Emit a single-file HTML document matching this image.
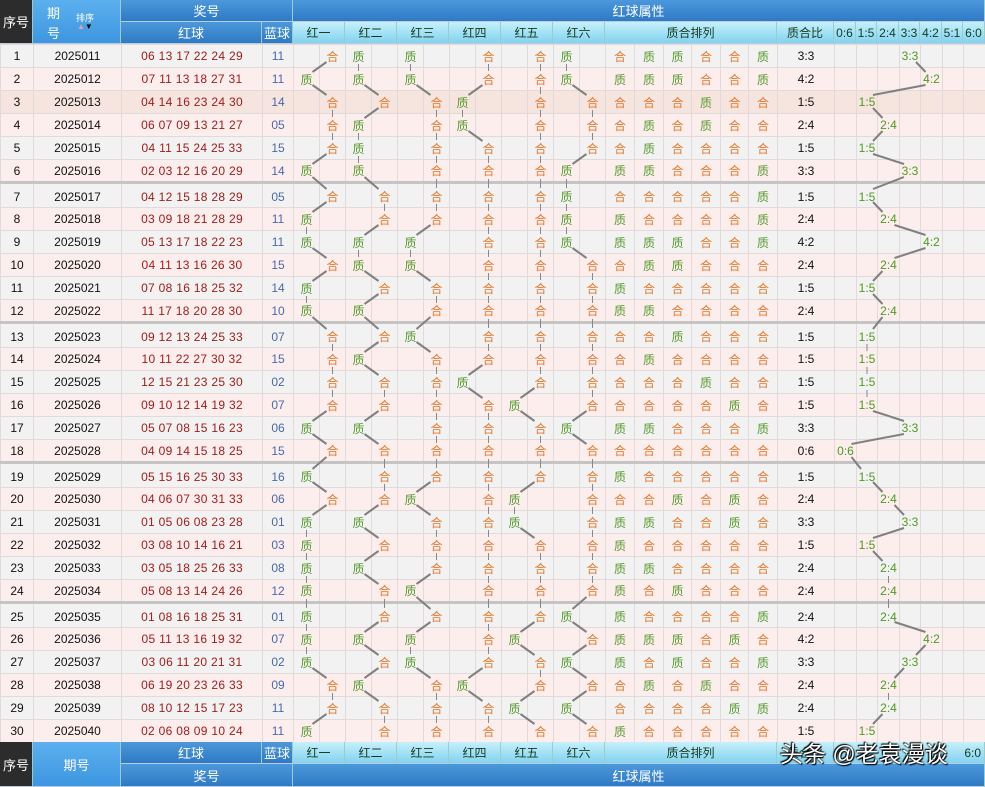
<!DOCTYPE html>
<html><head><meta charset="utf-8">
<style>
*{margin:0;padding:0;box-sizing:border-box}
body{width:985px;height:787px;overflow:hidden;background:#fff;position:relative;font-family:"Liberation Sans","Noto Sans CJK SC",sans-serif}
.hd{position:absolute;display:flex;align-items:center;justify-content:center;color:#fff;font-size:13px;border-right:1px solid #9cc;border-bottom:1px solid #bcd;font-family:"Liberation Sans","Noto Sans CJK SC",sans-serif}
.dk{background:#2c2c2c}
.bl{background:linear-gradient(#4c98dc,#2f7ac4)}
.lb{background:linear-gradient(#5cb0ee,#3d96e0)}
.cy{background:linear-gradient(#c6f0fb,#82d3ef);color:#163a20;font-size:12px}
table{position:absolute;left:0;top:44px;border-collapse:collapse;table-layout:fixed;width:985px}
td{height:23px;border:1px solid #e2dada;padding:0;text-align:center;font-size:12px;color:#111;white-space:nowrap;overflow:hidden;font-family:"Liberation Sans","Noto Sans CJK SC",sans-serif}
tr.a td{background:#f2f2f2}
tr.p td{background:#fdeeee}
tr.q td{background:#f6e5df}
tr.s td{border-top:3px solid #c4c4c4;height:25px;padding-top:2px}
td.r{color:#a01c1c;font-size:12px;letter-spacing:0.3px}
td.b{color:#4a68a8;font-size:12px}
td.z{color:#5a9a30}
td.h{color:#e8782c}
td.g{color:#4f9a1e;overflow:visible}
svg{position:absolute;left:0;top:0;pointer-events:none}
.wm{position:absolute;left:780px;top:735px;font-size:23px;color:#fff;font-family:"Liberation Sans","Noto Sans CJK SC",sans-serif;text-shadow:0 0 2px #000,1px 1px 1px #000,-1px -1px 1px #000;white-space:nowrap}
</style></head><body>
<div class="hd dk" style="left:0;top:0;width:33px;height:44px">序号</div>
<div class="hd lb" style="left:33px;top:0;width:88px;height:44px"></div>
<div style="position:absolute;left:47px;top:4px;color:#fff;font-size:13px;line-height:20px;width:14px">期<br>号</div>
<div style="position:absolute;left:76px;top:11px;color:#fff;font-size:9px">排序</div>
<div style="position:absolute;left:77px;top:22px;font-size:8px;color:#e8a0a0">▲<span style="color:#111">▼</span></div>
<div class="hd bl" style="left:121px;top:0;width:172px;height:22px">奖号</div>
<div class="hd bl" style="left:121px;top:22px;width:141px;height:22px">红球</div>
<div class="hd bl" style="left:262px;top:22px;width:31px;height:22px">蓝球</div>
<div class="hd bl" style="left:293px;top:0;width:692px;height:22px">红球属性</div>
<div class="hd cy" style="left:293px;top:22px;width:52px;height:22px">红一</div>
<div class="hd cy" style="left:345px;top:22px;width:52px;height:22px">红二</div>
<div class="hd cy" style="left:397px;top:22px;width:52px;height:22px">红三</div>
<div class="hd cy" style="left:449px;top:22px;width:52px;height:22px">红四</div>
<div class="hd cy" style="left:501px;top:22px;width:52px;height:22px">红五</div>
<div class="hd cy" style="left:553px;top:22px;width:52px;height:22px">红六</div>
<div class="hd cy" style="left:605px;top:22px;width:172px;height:22px">质合排列</div>
<div class="hd cy" style="left:777px;top:22px;width:57px;height:22px">质合比</div>
<div class="hd cy" style="left:834px;top:22px;width:22px;height:22px">0:6</div>
<div class="hd cy" style="left:856px;top:22px;width:21px;height:22px">1:5</div>
<div class="hd cy" style="left:877px;top:22px;width:22px;height:22px">2:4</div>
<div class="hd cy" style="left:899px;top:22px;width:21px;height:22px">3:3</div>
<div class="hd cy" style="left:920px;top:22px;width:22px;height:22px">4:2</div>
<div class="hd cy" style="left:942px;top:22px;width:21px;height:22px">5:1</div>
<div class="hd cy" style="left:963px;top:22px;width:22px;height:22px">6:0</div>

<table id="t">
<colgroup><col style="width:33px"><col style="width:88px"><col style="width:141px"><col style="width:31px">
<col style="width:26px"><col style="width:26px"><col style="width:26px"><col style="width:26px"><col style="width:26px"><col style="width:26px"><col style="width:26px"><col style="width:26px"><col style="width:26px"><col style="width:26px"><col style="width:26px"><col style="width:26px">
<col style="width:29px"><col style="width:29px"><col style="width:28px"><col style="width:29px"><col style="width:28px"><col style="width:29px">
<col style="width:57px"><col style="width:22px"><col style="width:21px"><col style="width:22px"><col style="width:21px"><col style="width:22px"><col style="width:21px"><col style="width:22px"></colgroup>
<tr class=a><td>1<td>2025011<td class=r>06 13 17 22 24 29<td class=b>11<td><td class=h>合<td class=z>质<td><td class=z>质<td><td><td class=h>合<td><td class=h>合<td class=z>质<td><td class=h>合<td class=z>质<td class=z>质<td class=h>合<td class=h>合<td class=z>质<td>3:3<td><td><td><td class=g>3:3<td><td><td>
<tr class=p><td>2<td>2025012<td class=r>07 11 13 18 27 31<td class=b>11<td class=z>质<td><td class=z>质<td><td class=z>质<td><td><td class=h>合<td><td class=h>合<td class=z>质<td><td class=z>质<td class=z>质<td class=z>质<td class=h>合<td class=h>合<td class=z>质<td>4:2<td><td><td><td><td class=g>4:2<td><td>
<tr class=q><td>3<td>2025013<td class=r>04 14 16 23 24 30<td class=b>14<td><td class=h>合<td><td class=h>合<td><td class=h>合<td class=z>质<td><td><td class=h>合<td><td class=h>合<td class=h>合<td class=h>合<td class=h>合<td class=z>质<td class=h>合<td class=h>合<td>1:5<td><td class=g>1:5<td><td><td><td><td>
<tr class=p><td>4<td>2025014<td class=r>06 07 09 13 21 27<td class=b>05<td><td class=h>合<td class=z>质<td><td><td class=h>合<td class=z>质<td><td><td class=h>合<td><td class=h>合<td class=h>合<td class=z>质<td class=h>合<td class=z>质<td class=h>合<td class=h>合<td>2:4<td><td><td class=g>2:4<td><td><td><td>
<tr class=a><td>5<td>2025015<td class=r>04 11 15 24 25 33<td class=b>15<td><td class=h>合<td class=z>质<td><td><td class=h>合<td><td class=h>合<td><td class=h>合<td><td class=h>合<td class=h>合<td class=z>质<td class=h>合<td class=h>合<td class=h>合<td class=h>合<td>1:5<td><td class=g>1:5<td><td><td><td><td>
<tr class=p><td>6<td>2025016<td class=r>02 03 12 16 20 29<td class=b>14<td class=z>质<td><td class=z>质<td><td><td class=h>合<td><td class=h>合<td><td class=h>合<td class=z>质<td><td class=z>质<td class=z>质<td class=h>合<td class=h>合<td class=h>合<td class=z>质<td>3:3<td><td><td><td class=g>3:3<td><td><td>
<tr class="a s"><td>7<td>2025017<td class=r>04 12 15 18 28 29<td class=b>05<td><td class=h>合<td><td class=h>合<td><td class=h>合<td><td class=h>合<td><td class=h>合<td class=z>质<td><td class=h>合<td class=h>合<td class=h>合<td class=h>合<td class=h>合<td class=z>质<td>1:5<td><td class=g>1:5<td><td><td><td><td>
<tr class=p><td>8<td>2025018<td class=r>03 09 18 21 28 29<td class=b>11<td class=z>质<td><td><td class=h>合<td><td class=h>合<td><td class=h>合<td><td class=h>合<td class=z>质<td><td class=z>质<td class=h>合<td class=h>合<td class=h>合<td class=h>合<td class=z>质<td>2:4<td><td><td class=g>2:4<td><td><td><td>
<tr class=a><td>9<td>2025019<td class=r>05 13 17 18 22 23<td class=b>11<td class=z>质<td><td class=z>质<td><td class=z>质<td><td><td class=h>合<td><td class=h>合<td class=z>质<td><td class=z>质<td class=z>质<td class=z>质<td class=h>合<td class=h>合<td class=z>质<td>4:2<td><td><td><td><td class=g>4:2<td><td>
<tr class=p><td>10<td>2025020<td class=r>04 11 13 16 26 30<td class=b>15<td><td class=h>合<td class=z>质<td><td class=z>质<td><td><td class=h>合<td><td class=h>合<td><td class=h>合<td class=h>合<td class=z>质<td class=z>质<td class=h>合<td class=h>合<td class=h>合<td>2:4<td><td><td class=g>2:4<td><td><td><td>
<tr class=a><td>11<td>2025021<td class=r>07 08 16 18 25 32<td class=b>14<td class=z>质<td><td><td class=h>合<td><td class=h>合<td><td class=h>合<td><td class=h>合<td><td class=h>合<td class=z>质<td class=h>合<td class=h>合<td class=h>合<td class=h>合<td class=h>合<td>1:5<td><td class=g>1:5<td><td><td><td><td>
<tr class=p><td>12<td>2025022<td class=r>11 17 18 20 28 30<td class=b>10<td class=z>质<td><td class=z>质<td><td><td class=h>合<td><td class=h>合<td><td class=h>合<td><td class=h>合<td class=z>质<td class=z>质<td class=h>合<td class=h>合<td class=h>合<td class=h>合<td>2:4<td><td><td class=g>2:4<td><td><td><td>
<tr class="a s"><td>13<td>2025023<td class=r>09 12 13 24 25 33<td class=b>07<td><td class=h>合<td><td class=h>合<td class=z>质<td><td><td class=h>合<td><td class=h>合<td><td class=h>合<td class=h>合<td class=h>合<td class=z>质<td class=h>合<td class=h>合<td class=h>合<td>1:5<td><td class=g>1:5<td><td><td><td><td>
<tr class=p><td>14<td>2025024<td class=r>10 11 22 27 30 32<td class=b>15<td><td class=h>合<td class=z>质<td><td><td class=h>合<td><td class=h>合<td><td class=h>合<td><td class=h>合<td class=h>合<td class=z>质<td class=h>合<td class=h>合<td class=h>合<td class=h>合<td>1:5<td><td class=g>1:5<td><td><td><td><td>
<tr class=a><td>15<td>2025025<td class=r>12 15 21 23 25 30<td class=b>02<td><td class=h>合<td><td class=h>合<td><td class=h>合<td class=z>质<td><td><td class=h>合<td><td class=h>合<td class=h>合<td class=h>合<td class=h>合<td class=z>质<td class=h>合<td class=h>合<td>1:5<td><td class=g>1:5<td><td><td><td><td>
<tr class=p><td>16<td>2025026<td class=r>09 10 12 14 19 32<td class=b>07<td><td class=h>合<td><td class=h>合<td><td class=h>合<td><td class=h>合<td class=z>质<td><td><td class=h>合<td class=h>合<td class=h>合<td class=h>合<td class=h>合<td class=z>质<td class=h>合<td>1:5<td><td class=g>1:5<td><td><td><td><td>
<tr class=a><td>17<td>2025027<td class=r>05 07 08 15 16 23<td class=b>06<td class=z>质<td><td class=z>质<td><td><td class=h>合<td><td class=h>合<td><td class=h>合<td class=z>质<td><td class=z>质<td class=z>质<td class=h>合<td class=h>合<td class=h>合<td class=z>质<td>3:3<td><td><td><td class=g>3:3<td><td><td>
<tr class=p><td>18<td>2025028<td class=r>04 09 14 15 18 25<td class=b>15<td><td class=h>合<td><td class=h>合<td><td class=h>合<td><td class=h>合<td><td class=h>合<td><td class=h>合<td class=h>合<td class=h>合<td class=h>合<td class=h>合<td class=h>合<td class=h>合<td>0:6<td class=g>0:6<td><td><td><td><td><td>
<tr class="a s"><td>19<td>2025029<td class=r>05 15 16 25 30 33<td class=b>16<td class=z>质<td><td><td class=h>合<td><td class=h>合<td><td class=h>合<td><td class=h>合<td><td class=h>合<td class=z>质<td class=h>合<td class=h>合<td class=h>合<td class=h>合<td class=h>合<td>1:5<td><td class=g>1:5<td><td><td><td><td>
<tr class=p><td>20<td>2025030<td class=r>04 06 07 30 31 33<td class=b>06<td><td class=h>合<td><td class=h>合<td class=z>质<td><td><td class=h>合<td class=z>质<td><td><td class=h>合<td class=h>合<td class=h>合<td class=z>质<td class=h>合<td class=z>质<td class=h>合<td>2:4<td><td><td class=g>2:4<td><td><td><td>
<tr class=a><td>21<td>2025031<td class=r>01 05 06 08 23 28<td class=b>01<td class=z>质<td><td class=z>质<td><td><td class=h>合<td><td class=h>合<td class=z>质<td><td><td class=h>合<td class=z>质<td class=z>质<td class=h>合<td class=h>合<td class=z>质<td class=h>合<td>3:3<td><td><td><td class=g>3:3<td><td><td>
<tr class=p><td>22<td>2025032<td class=r>03 08 10 14 16 21<td class=b>03<td class=z>质<td><td><td class=h>合<td><td class=h>合<td><td class=h>合<td><td class=h>合<td><td class=h>合<td class=z>质<td class=h>合<td class=h>合<td class=h>合<td class=h>合<td class=h>合<td>1:5<td><td class=g>1:5<td><td><td><td><td>
<tr class=a><td>23<td>2025033<td class=r>03 05 18 25 26 33<td class=b>08<td class=z>质<td><td class=z>质<td><td><td class=h>合<td><td class=h>合<td><td class=h>合<td><td class=h>合<td class=z>质<td class=z>质<td class=h>合<td class=h>合<td class=h>合<td class=h>合<td>2:4<td><td><td class=g>2:4<td><td><td><td>
<tr class=p><td>24<td>2025034<td class=r>05 08 13 14 24 26<td class=b>12<td class=z>质<td><td><td class=h>合<td class=z>质<td><td><td class=h>合<td><td class=h>合<td><td class=h>合<td class=z>质<td class=h>合<td class=z>质<td class=h>合<td class=h>合<td class=h>合<td>2:4<td><td><td class=g>2:4<td><td><td><td>
<tr class="a s"><td>25<td>2025035<td class=r>01 08 16 18 25 31<td class=b>01<td class=z>质<td><td><td class=h>合<td><td class=h>合<td><td class=h>合<td><td class=h>合<td class=z>质<td><td class=z>质<td class=h>合<td class=h>合<td class=h>合<td class=h>合<td class=z>质<td>2:4<td><td><td class=g>2:4<td><td><td><td>
<tr class=p><td>26<td>2025036<td class=r>05 11 13 16 19 32<td class=b>07<td class=z>质<td><td class=z>质<td><td class=z>质<td><td><td class=h>合<td class=z>质<td><td><td class=h>合<td class=z>质<td class=z>质<td class=z>质<td class=h>合<td class=z>质<td class=h>合<td>4:2<td><td><td><td><td class=g>4:2<td><td>
<tr class=a><td>27<td>2025037<td class=r>03 06 11 20 21 31<td class=b>02<td class=z>质<td><td><td class=h>合<td class=z>质<td><td><td class=h>合<td><td class=h>合<td class=z>质<td><td class=z>质<td class=h>合<td class=z>质<td class=h>合<td class=h>合<td class=z>质<td>3:3<td><td><td><td class=g>3:3<td><td><td>
<tr class=p><td>28<td>2025038<td class=r>06 19 20 23 26 33<td class=b>09<td><td class=h>合<td class=z>质<td><td><td class=h>合<td class=z>质<td><td><td class=h>合<td><td class=h>合<td class=h>合<td class=z>质<td class=h>合<td class=z>质<td class=h>合<td class=h>合<td>2:4<td><td><td class=g>2:4<td><td><td><td>
<tr class=a><td>29<td>2025039<td class=r>08 10 12 15 17 23<td class=b>11<td><td class=h>合<td><td class=h>合<td><td class=h>合<td><td class=h>合<td class=z>质<td><td class=z>质<td><td class=h>合<td class=h>合<td class=h>合<td class=h>合<td class=z>质<td class=z>质<td>2:4<td><td><td class=g>2:4<td><td><td><td>
<tr class=p><td>30<td>2025040<td class=r>02 06 08 09 10 24<td class=b>11<td class=z>质<td><td><td class=h>合<td><td class=h>合<td><td class=h>合<td><td class=h>合<td><td class=h>合<td class=z>质<td class=h>合<td class=h>合<td class=h>合<td class=h>合<td class=h>合<td>1:5<td><td class=g>1:5<td><td><td><td><td>
</table>

<div class="hd dk" style="left:0;top:742px;width:33px;height:45px">序号</div>
<div class="hd lb" style="left:33px;top:742px;width:88px;height:45px">期号</div>
<div class="hd bl" style="left:121px;top:742px;width:141px;height:22px">红球</div>
<div class="hd bl" style="left:262px;top:742px;width:31px;height:22px">蓝球</div>
<div class="hd cy" style="left:293px;top:742px;width:52px;height:22px">红一</div>
<div class="hd cy" style="left:345px;top:742px;width:52px;height:22px">红二</div>
<div class="hd cy" style="left:397px;top:742px;width:52px;height:22px">红三</div>
<div class="hd cy" style="left:449px;top:742px;width:52px;height:22px">红四</div>
<div class="hd cy" style="left:501px;top:742px;width:52px;height:22px">红五</div>
<div class="hd cy" style="left:553px;top:742px;width:52px;height:22px">红六</div>
<div class="hd cy" style="left:605px;top:742px;width:172px;height:22px">质合排列</div>
<div class="hd cy" style="left:777px;top:742px;width:57px;height:22px">质合比</div>
<div class="hd cy" style="left:834px;top:742px;width:151px;height:22px;justify-content:flex-end;padding-right:3px">6:0</div>
<div class="hd bl" style="left:121px;top:764px;width:172px;height:23px">奖号</div>
<div class="hd bl" style="left:293px;top:764px;width:692px;height:23px">红球属性</div>
<div class="wm">头条 @老袁漫谈</div>

<svg id="sv" width="985" height="787"></svg>
<script>
(function(){
var t=document.getElementById('t'),sv=document.getElementById('sv');
var rows=t.rows,prev=null,s='';
function ctr(c){var r=c.getBoundingClientRect();var cs=getComputedStyle(c);var pt=parseFloat(cs.paddingTop)||0;return [r.left+r.width/2,r.top+pt/2+r.height/2];}
for(var i=0;i<rows.length;i++){
 var cells=rows[i].cells,pts=[];
 for(var k=0;k<6;k++){var c=cells[4+2*k].textContent?cells[4+2*k]:cells[5+2*k];pts.push(ctr(c));}
 for(var n=0;n<7;n++){if(cells[23+n].textContent){pts.push(ctr(cells[23+n]));break;}}
 if(prev){for(var j=0;j<pts.length;j++){var a=prev[j],b=pts[j];
  if(Math.abs(a[0]-b[0])<2){s+='<line x1="'+a[0]+'" y1="'+(a[1]+8)+'" x2="'+b[0]+'" y2="'+(b[1]-8)+'" stroke="#888" stroke-width="1"/>';}
  else{var dx=b[0]>a[0]?6:-6;s+='<line x1="'+(a[0]+dx)+'" y1="'+(a[1]+6)+'" x2="'+(b[0]-dx)+'" y2="'+(b[1]-7)+'" stroke="#808080" stroke-width="2"/>';}
 }}
 prev=pts;
}
sv.innerHTML=s;
})();
</script>
</body></html>
